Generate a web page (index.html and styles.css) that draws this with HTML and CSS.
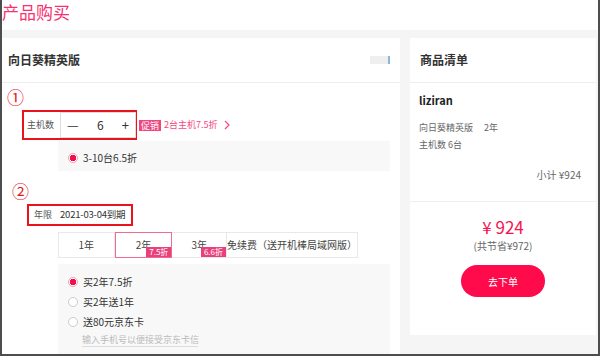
FILE: index.html
```html
<!DOCTYPE html>
<html lang="zh-CN">
<head>
    <meta charset="UTF-8">
    <link rel="stylesheet" href="styles.css">
    <title>产品购买</title>
</head>
<body>
    <div class="page">
        <h1 class="page-title">产品购买</h1>
        <div class="main">
            <div class="panel panel-left">
                <div class="panel-header">
                    <span>向日葵精英版</span>
                    <span class="header-blob"></span>
                </div>

                <div class="mark mark-1">①</div>
                <div class="qty-row">
                    <div class="red-box qty-box">
                        <span class="field-label">主机数</span>
                        <div class="stepper">
                            <span class="step-btn">—</span>
                            <span class="step-val">6</span>
                            <span class="step-btn">+</span>
                        </div>
                    </div>
                    <span class="promo-tag">促销</span>
                    <span class="promo-text">2台主机7.5折</span>
                    <svg class="promo-arrow" width="6" height="10" viewBox="0 0 6 10"><path d="M1 1 L5 5 L1 9" fill="none" stroke="#f5487f" stroke-width="1.2"/></svg>
                </div>
                <div class="sub-box">
                    <label class="radio-line"><span class="radio checked"></span>3-10台6.5折</label>
                </div>

                <div class="mark mark-2">②</div>
                <div class="red-box term-box">
                    <span class="field-label">年限</span>
                    <span class="term-date">2021-03-04到期</span>
                </div>

                <div class="tabs">
                    <div class="tab tab-1">1年</div>
                    <div class="tab tab-2 selected">2年<span class="tab-badge">7.5折</span></div>
                    <div class="tab tab-3">3年<span class="tab-badge">6.6折</span></div>
                    <div class="tab tab-4">免续费（送开机棒局域网版）</div>
                </div>

                <div class="options-box">
                    <label class="radio-line"><span class="radio checked"></span>买2年7.5折</label>
                    <label class="radio-line"><span class="radio"></span>买2年送1年</label>
                    <label class="radio-line"><span class="radio"></span>送80元京东卡</label>
                    <div class="phone-input">输入手机号以便接受京东卡信</div>
                </div>
            </div>

            <div class="panel panel-right">
                <div class="panel-header">
                    <span>商品清单</span>
                </div>
                <div class="order-info">
                    <div class="user-name">liziran</div>
                    <div class="info-line">向日葵精英版<span class="info-gap"></span>2年</div>
                    <div class="info-line">主机数 6台</div>
                    <div class="subtotal">小计 ¥924</div>
                </div>
                <div class="order-total">
                    <div class="total-price">¥ 924</div>
                    <div class="total-save">(共节省¥972)</div>
                    <button class="order-btn">去下单</button>
                </div>
            </div>
        </div>
    </div>
</body>
</html>
```

FILE: styles.css
```css
* {
    box-sizing: border-box;
}

body {
    margin: 0;
    font-family: "Noto Sans CJK SC", "Noto Sans", "Liberation Sans", sans-serif;
    line-height: 1.2;
    color: #333;
}

.page {
    width: 600px;
    height: 356px;
    overflow: hidden;
    border: 2px solid #4d4d4d;
    border-top: none;
    background: #f5f5f5;
}

.page-title {
    margin: 0;
    height: 30px;
    padding-top: 1px;
    font-size: 17px;
    line-height: 22px;
    font-weight: normal;
    color: #f9306f;
    background: #fff;
}

.main {
    display: flex;
    gap: 10px;
    padding-top: 8px;
}

.panel {
    background: #fff;
}

.panel-left {
    width: 398px;
    height: 330px;
}

.panel-right {
    width: 186px;
    height: 297px;
}

.panel-header {
    height: 45px;
    display: flex;
    align-items: center;
    justify-content: space-between;
    border-bottom: 1px solid #eeeeee;
    font-size: 12px;
    font-weight: bold;
    color: #333;
}

.panel-left .panel-header {
    padding: 0 10px 0 6px;
}

.panel-right .panel-header {
    padding: 0 10px;
}

.header-blob {
    width: 20px;
    height: 8px;
    background: #efefef;
    border-right: 2px solid #8bb8d8;
}

.mark {
    font-size: 17px;
    line-height: 20px;
    color: #e8131b;
}

.mark-1 {
    margin: 4px 0 0 5px;
}

.mark-2 {
    margin: 10px 0 0 10px;
}

.qty-row {
    display: flex;
    align-items: center;
    margin-top: 3px;
    white-space: nowrap;
}

.red-box {
    display: flex;
    align-items: center;
    border: 2px solid #e8131b;
    white-space: nowrap;
}

.qty-box {
    margin-left: 20px;
    width: 115px;
    height: 30px;
    padding-left: 3px;
    flex-shrink: 0;
}

.field-label {
    flex-shrink: 0;
    font-size: 9px;
    color: #555;
}

.stepper {
    margin-left: 6px;
    width: 76px;
    height: 26px;
    flex-shrink: 0;
    display: flex;
    align-items: center;
    justify-content: space-between;
    border: 1px solid #dddddd;
    padding: 0 6px;
    font-size: 12px;
    color: #333;
}

.step-btn {
    font-size: 13px;
}

.promo-tag {
    margin-left: 2px;
    padding: 0 2px;
    font-size: 9px;
    line-height: 11px;
    color: #fff;
    background: #f0457d;
}

.promo-text {
    margin-left: 3px;
    font-size: 9px;
    color: #f5487f;
}

.promo-arrow {
    margin-left: 6px;
}

.sub-box {
    margin: 1px 0 0 56px;
    width: 332px;
    height: 30px;
    background: #f8f8f8;
    display: flex;
    align-items: center;
    padding: 4px 0 0 10px;
}

.radio-line {
    display: flex;
    align-items: center;
    font-size: 10px;
    line-height: 12px;
    color: #333;
}

.radio {
    width: 10px;
    height: 10px;
    border: 1px solid #cccccc;
    border-radius: 50%;
    margin-right: 5px;
    background: #fff;
}

.radio.checked {
    border-color: #f7a0b4;
    background: radial-gradient(circle, #f0104a 0 3px, #fff 3.5px);
}

.term-box {
    margin: 3px 0 0 25px;
    width: 106px;
    height: 22px;
    padding-left: 5px;
}

.term-date {
    margin-left: 8px;
    font-size: 9.5px;
    letter-spacing: -0.2px;
    color: #333;
}

.tabs {
    display: flex;
    margin: 6px 0 0 56px;
    width: 300px;
    height: 26px;
    border: 1px solid #e8e8e8;
    white-space: nowrap;
}

.tab {
    position: relative;
    display: flex;
    align-items: center;
    justify-content: center;
    font-size: 10px;
    color: #444;
    border-right: 1px solid #e8e8e8;
}

.tab-1 { width: 56px; }
.tab-2 { width: 58px; }
.tab-3 { width: 55px; }

.tab-4 {
    flex: 1;
    border-right: none;
}

.tab.selected {
    margin: -1px 0;
    border: 1px solid #f06a92;
}

.tab-badge {
    position: absolute;
    right: 0;
    bottom: 0;
    padding: 0 3px;
    font-size: 8px;
    line-height: 10px;
    color: #fff;
    background: #e8407a;
}

.options-box {
    margin: 6px 0 0 56px;
    width: 332px;
    height: 100px;
    background: #f8f8f8;
    padding: 12px 0 0 10px;
    display: flex;
    flex-direction: column;
    gap: 8px;
}

.phone-input {
    margin: -2px 0 0 14px;
    width: 116px;
    font-size: 9px;
    line-height: 11px;
    color: #bbbbbb;
    border-bottom: 1px solid #dddddd;
    padding-bottom: 1px;
    white-space: nowrap;
}

.order-info {
    height: 119px;
    border-bottom: 1px solid #eeeeee;
    padding: 11px 10px 0 9px;
}

.user-name {
    font-size: 11px;
    font-weight: bold;
    color: #222;
}

.info-line {
    margin-top: 16px;
    font-size: 9px;
    color: #666;
}

.info-line + .info-line {
    margin-top: 6px;
}

.info-gap {
    display: inline-block;
    width: 11px;
}

.subtotal {
    margin-top: 18px;
    text-align: right;
    font-size: 10px;
    color: #666;
    padding-right: 5px;
}

.order-total {
    display: flex;
    flex-direction: column;
    align-items: center;
    padding-top: 14px;
}

.total-price {
    font-size: 17px;
    line-height: 22px;
    color: #f5144f;
}

.total-save {
    margin-top: 2px;
    font-size: 10px;
    line-height: 12px;
    color: #666;
}

.order-btn {
    margin-top: 13px;
    width: 84px;
    height: 32px;
    border: none;
    border-radius: 16px;
    background: #ff0a4b;
    color: #fff;
    font-family: inherit;
    font-size: 10px;
}
```
